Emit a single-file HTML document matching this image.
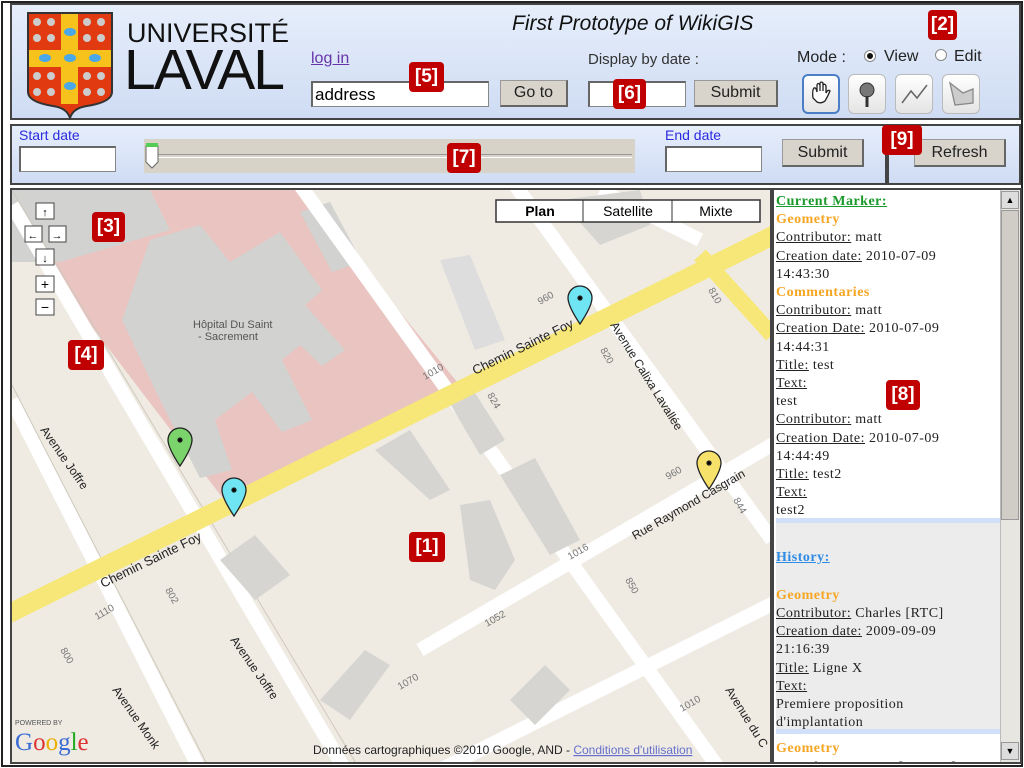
<!DOCTYPE html>
<html><head><meta charset="utf-8"><style>
*{margin:0;padding:0;box-sizing:border-box}
body{width:1024px;height:768px;overflow:hidden;background:#fff;font-family:"Liberation Sans",sans-serif;position:relative}
.abs{position:absolute}
.panel{position:absolute;border:2px solid #444;background:linear-gradient(#e6eefb,#cfdcf3)}
.btn{position:absolute;background:#d8d4cc;border:1px solid #999;border-right:2px solid #666;border-bottom:2px solid #666;font-size:16px;color:#222;text-align:center}
.inp{position:absolute;background:#fff;border:1px solid #888;border-top:2px solid #666;border-left:2px solid #666}
.lab{position:absolute;background:#c00000;color:#fff;font-weight:bold;font-size:19px;border-radius:4px;text-align:center;line-height:30px;height:30px;font-family:"Liberation Sans Narrow","Liberation Sans",sans-serif}
.tool{position:absolute;top:74px;width:38px;height:40px;border:1px solid #bbb;border-radius:6px;background:linear-gradient(#fff,#e4e4e4)}
.side{position:absolute;left:776px;top:190px;width:224px;height:572px;overflow:hidden;font-family:"Liberation Serif",serif;font-size:14px;letter-spacing:0.5px;line-height:18.2px;color:#222;white-space:nowrap}
.side u{text-decoration:underline}
.or{color:#f5a623;font-weight:bold}
</style></head><body>
<div class="abs" style="left:1px;top:1px;width:1022px;height:766px;border:2px solid #222"></div>
<!-- header -->
<div class="panel" style="left:10px;top:3px;width:1011px;height:117px"></div>
<svg class="abs" style="left:25px;top:10px" width="90" height="110" viewBox="0 0 90 110">
<path d="M3 3H87V82Q87 92 62 96Q48 98 45 108Q42 98 28 96Q3 92 3 82Z" fill="#e23a10" stroke="#333" stroke-width="2"/>
<rect x="36" y="4" width="17" height="90" fill="#f6c21b"/>
<rect x="4" y="40" width="82" height="17" fill="#f6c21b"/>
<g fill="#4aa8e8"><ellipse cx="45" cy="22" rx="6" ry="4"/><ellipse cx="45" cy="48" rx="6" ry="4"/><ellipse cx="20" cy="48" rx="6" ry="4"/><ellipse cx="70" cy="48" rx="6" ry="4"/><ellipse cx="45" cy="76" rx="6" ry="4"/></g>
<g fill="#ccc"><circle cx="12" cy="12" r="4"/><circle cx="26" cy="12" r="4"/><circle cx="12" cy="28" r="4"/><circle cx="26" cy="28" r="4"/><circle cx="62" cy="12" r="4"/><circle cx="76" cy="12" r="4"/><circle cx="62" cy="28" r="4"/><circle cx="76" cy="28" r="4"/><circle cx="12" cy="66" r="4"/><circle cx="26" cy="66" r="4"/><circle cx="12" cy="82" r="4"/><circle cx="26" cy="82" r="4"/><circle cx="62" cy="66" r="4"/><circle cx="76" cy="66" r="4"/><circle cx="62" cy="82" r="4"/><circle cx="76" cy="82" r="4"/></g>
</svg>
<div class="abs" style="left:127px;top:18px;font-size:27px;color:#111;letter-spacing:0px">UNIVERSITÉ</div>
<div class="abs" style="left:124px;top:40px;font-size:57px;color:#111;letter-spacing:-2px;line-height:60px">LAVAL</div>
<div class="abs" style="left:512px;top:12px;font-size:21px;font-style:italic;color:#111">First Prototype of WikiGIS</div>
<div class="abs" style="left:311px;top:50px;font-size:16px;color:#6633aa;text-decoration:underline">log in</div>
<div class="inp" style="left:311px;top:81px;width:178px;height:26px;font-size:17px;padding:2px 2px">address</div>
<div class="btn" style="left:500px;top:80px;width:68px;height:27px;line-height:24px">Go to</div>
<div class="abs" style="left:588px;top:51px;font-size:15px;color:#333">Display by date :</div>
<div class="inp" style="left:588px;top:81px;width:98px;height:26px"></div>
<div class="btn" style="left:694px;top:80px;width:84px;height:27px;line-height:24px">Submit</div>
<div class="abs" style="left:797px;top:49px;font-size:16px;color:#222">Mode :</div>
<div class="abs" style="left:864px;top:50px;width:12px;height:12px;border-radius:50%;background:#fff;border:1px solid #888"><div style="margin:2px;width:6px;height:6px;border-radius:50%;background:#111"></div></div>
<div class="abs" style="left:884px;top:48px;font-size:16px;color:#222">View</div>
<div class="abs" style="left:935px;top:49px;width:12px;height:12px;border-radius:50%;background:#fff;border:1px solid #888"></div>
<div class="abs" style="left:954px;top:48px;font-size:16px;color:#222">Edit</div>
<div class="tool" style="left:802px;border:2px solid #4a7fc8"><svg width="34" height="36"><path d="M9 22Q8 14 10 12Q12 11 13 16V9Q14 6 16 9V15V7Q17 5 19 7V15V9Q21 7 22 10V17Q24 13 26 15Q24 20 21 25Q17 28 13 26Z" fill="#fff" stroke="#222" stroke-width="1.3"/></svg></div>
<div class="tool" style="left:848px"><svg width="36" height="38"><circle cx="18" cy="15" r="7" fill="#777" stroke="#333"/><path d="M18 21V32" stroke="#333" stroke-width="3"/></svg></div>
<div class="tool" style="left:895px"><svg width="36" height="38"><path d="M6 28L15 16L21 23L31 10" fill="none" stroke="#666" stroke-width="1.5"/></svg></div>
<div class="tool" style="left:942px"><svg width="36" height="38"><path d="M7 8L12 30L30 28V14L20 18Z" fill="#ccc" stroke="#888" stroke-width="1.3"/></svg></div>
<div class="lab" style="left:928px;top:10px;width:29px">[2]</div>
<div class="lab" style="left:409px;top:62px;width:35px">[5]</div>
<div class="lab" style="left:613px;top:79px;width:33px">[6]</div>
<!-- second panel -->
<div class="panel" style="left:10px;top:124px;width:1011px;height:61px"></div>
<div class="abs" style="left:885px;top:124px;width:4px;height:61px;border-left:2px solid #444;border-right:2px solid #444;background:#dde7f7"></div>
<div class="abs" style="left:19px;top:127px;font-size:14px;color:#2a2ae0">Start date</div>
<div class="inp" style="left:19px;top:146px;width:97px;height:26px"></div>
<div class="abs" style="left:144px;top:139px;width:491px;height:34px;background:#d7d3c9"></div>
<div class="abs" style="left:150px;top:154px;width:482px;height:4px;border-top:1px solid #999;border-bottom:1px solid #fff"></div>
<svg class="abs" style="left:145px;top:142px" width="14" height="28"><path d="M1 4H13V20L7 26L1 20Z" fill="#fff" stroke="#666"/><rect x="1" y="1" width="12" height="4" fill="#5c5"/></svg>
<div class="lab" style="left:447px;top:143px;width:34px">[7]</div>
<div class="abs" style="left:665px;top:127px;font-size:14px;color:#2a2ae0">End date</div>
<div class="inp" style="left:665px;top:146px;width:97px;height:26px"></div>
<div class="btn" style="left:782px;top:139px;width:82px;height:28px;line-height:26px">Submit</div>
<div class="btn" style="left:914px;top:139px;width:92px;height:28px;line-height:26px">Refresh</div>
<div class="lab" style="left:882px;top:125px;width:40px">[9]</div>
<!-- map -->
<div class="abs" style="left:10px;top:188px;width:762px;height:576px;border:2px solid #444;overflow:hidden;background:#eeebe4">
<svg width="760" height="574" viewBox="12 190 760 574" style="display:block">
<rect x="0" y="180" width="800" height="600" fill="#efebe3"/>
<path d="M12 190H300L462 388L228 505L12 222Z" fill="#e9c4c0"/>
<g fill="#d2d2d0">
<path d="M12 190H150L170 230L60 262L12 262Z"/>
<path d="M150 240L200 225L230 262L280 232L322 290L305 305L345 350L322 366L300 345L282 360L312 420L282 432L252 392L215 420L232 470L200 478L160 400L122 320Z"/>
<path d="M300 212L330 202L362 262L332 272Z"/>
</g>
<path d="M440 260L470 255L505 340L475 350Z" fill="#ddd"/>
<g stroke="#fff" stroke-width="14" fill="none">
<path d="M12 400L200 770"/>
<path d="M12 205L345 770"/>
<path d="M300 185L720 770"/>
<path d="M515 185L772 540"/>
<path d="M420 650L780 440"/>
<path d="M440 770L780 600"/>
<path d="M600 190L700 240"/>
</g>
<g stroke="#cfc9bd" stroke-width="1" fill="none">
<path d="M12 385L210 770"/><path d="M12 190L360 770"/>
</g>
<g fill="#d6d5d2">
<path d="M375 450L410 430L450 490L430 500Z"/><path d="M445 395L470 385L505 440L480 455Z"/>
<path d="M500 475L535 458L580 540L550 555Z"/><path d="M460 505L490 500L515 560L495 590L470 580Z"/>
<path d="M220 560L255 535L290 575L255 600Z"/><path d="M320 700L365 650L390 665L350 720Z"/>
<path d="M510 700L545 665L570 690L535 725Z"/><path d="M560 200L640 190L650 225L600 245Z"/>
</g>
<path d="M0 618L780 232" stroke="#f6e778" stroke-width="19" fill="none"/>
<path d="M700 255L772 335" stroke="#f6e778" stroke-width="16" fill="none"/>
<g font-family="Liberation Sans" font-size="13" fill="#222">
<text transform="translate(103,588) rotate(-26)">Chemin Sainte Foy</text>
<text transform="translate(475,375) rotate(-26)">Chemin Sainte Foy</text>
<text transform="translate(40,430) rotate(55)" font-size="12">Avenue Joffre</text>
<text transform="translate(230,640) rotate(55)" font-size="12">Avenue Joffre</text>
<text transform="translate(112,690) rotate(55)" font-size="12">Avenue Monk</text>
<text transform="translate(610,325) rotate(58)" font-size="12">Avenue Calixa Lavallée</text>
<text transform="translate(635,540) rotate(-30)" font-size="12">Rue Raymond Casgrain</text>
<text transform="translate(725,690) rotate(58)" font-size="12">Avenue du C</text>
<text x="193" y="328" font-size="11" fill="#555">Hôpital Du Saint</text>
<text x="198" y="340" font-size="11" fill="#555">- Sacrement</text>
</g>
<g font-family="Liberation Sans" font-size="10" fill="#777">
<text transform="translate(425,380) rotate(-30)">1010</text><text transform="translate(540,305) rotate(-30)">960</text>
<text transform="translate(708,290) rotate(60)">810</text><text transform="translate(600,350) rotate(60)">820</text>
<text transform="translate(487,395) rotate(60)">824</text><text transform="translate(97,620) rotate(-30)">1110</text>
<text transform="translate(165,590) rotate(60)">802</text><text transform="translate(60,650) rotate(60)">800</text>
<text transform="translate(570,560) rotate(-30)">1016</text><text transform="translate(487,627) rotate(-30)">1052</text>
<text transform="translate(400,690) rotate(-30)">1070</text><text transform="translate(625,580) rotate(60)">850</text>
<text transform="translate(682,712) rotate(-30)">1010</text><text transform="translate(668,480) rotate(-30)">960</text>
<text transform="translate(733,500) rotate(60)">844</text>
</g>
<g stroke="#222" stroke-width="1.3">
<path d="M168 440a12 12 0 1 1 24 0q0 8-12 26q-12-18-12-26z" fill="#7bd36b"/><circle cx="180" cy="440" r="2" fill="#000"/>
<path d="M222 490a12 12 0 1 1 24 0q0 8-12 26q-12-18-12-26z" fill="#6fe4f2"/><circle cx="234" cy="490" r="2" fill="#000"/>
<path d="M568 298a12 12 0 1 1 24 0q0 8-12 26q-12-18-12-26z" fill="#6fe4f2"/><circle cx="580" cy="298" r="2" fill="#000"/>
<path d="M697 463a12 12 0 1 1 24 0q0 8-12 26q-12-18-12-26z" fill="#f6e16a"/><circle cx="709" cy="463" r="2" fill="#000"/>
</g>
<g font-family="Liberation Sans" font-size="11" text-anchor="middle" fill="#000">
<rect x="36" y="203" width="18" height="16" fill="#fff" stroke="#444"/><text x="45" y="216">↑</text>
<rect x="25" y="226" width="17" height="16" fill="#fff" stroke="#444"/><text x="33" y="239">←</text>
<rect x="49" y="226" width="17" height="16" fill="#fff" stroke="#444"/><text x="57" y="239">→</text>
<rect x="36" y="249" width="18" height="16" fill="#fff" stroke="#444"/><text x="45" y="262">↓</text>
<rect x="36" y="276" width="18" height="16" fill="#fff" stroke="#444"/><text x="45" y="289" font-size="14">+</text>
<rect x="36" y="299" width="18" height="16" fill="#fff" stroke="#444"/><text x="45" y="312" font-size="14">−</text>
</g>
<g font-family="Liberation Sans" font-size="14" text-anchor="middle">
<rect x="496" y="200" width="264" height="22" fill="#fff" stroke="#333" stroke-width="1.5"/>
<path d="M583 200V222M672 200V222" stroke="#333"/>
<text x="540" y="216" font-weight="bold">Plan</text><text x="628" y="216">Satellite</text><text x="716" y="216">Mixte</text>
</g>
<text x="15" y="725" font-family="Liberation Sans" font-size="7" fill="#555">POWERED BY</text>
<text x="15" y="750" font-family="Liberation Serif" font-size="25" fill="#3a6cd4">G<tspan fill="#d33">o</tspan><tspan fill="#e9b000">o</tspan>g<tspan fill="#2a2">l</tspan><tspan fill="#d33">e</tspan></text>
<text x="313" y="754" font-family="Liberation Sans" font-size="12" fill="#222">Données cartographiques ©2010 Google, AND - <tspan fill="#6670cc" text-decoration="underline">Conditions d'utilisation</tspan></text>
</svg>
</div>
<div class="lab" style="left:92px;top:212px;width:33px">[3]</div>
<div class="lab" style="left:68px;top:340px;width:36px">[4]</div>
<div class="lab" style="left:409px;top:532px;width:36px">[1]</div>
<!-- sidebar -->
<div class="abs" style="left:772px;top:188px;width:250px;height:576px;border:2px solid #444;background:#fff"></div>
<div class="abs" style="left:776px;top:519px;width:224px;height:212px;background:#ececec"></div>
<div class="abs" style="left:776px;top:518px;width:224px;height:5px;background:#cfe0f8"></div>
<div class="abs" style="left:776px;top:729px;width:224px;height:5px;background:#cfe0f8"></div>
<div class="side">
<div style="color:#1a9a2a;font-weight:bold;font-size:14px;text-decoration:underline;padding-top:3px">Current Marker:</div>
<div class="or">Geometry</div>
<div><u>Contributor:</u> matt</div>
<div><u>Creation date:</u> 2010-07-09</div>
<div>14:43:30</div>
<div class="or">Commentaries</div>
<div><u>Contributor:</u> matt</div>
<div><u>Creation Date:</u> 2010-07-09</div>
<div>14:44:31</div>
<div><u>Title:</u> test</div>
<div><u>Text:</u></div>
<div>test</div>
<div><u>Contributor:</u> matt</div>
<div><u>Creation Date:</u> 2010-07-09</div>
<div>14:44:49</div>
<div><u>Title:</u> test2</div>
<div><u>Text:</u></div>
<div>test2</div>
<div style="height:28px"></div>
<div style="color:#2d8be6;font-weight:bold;font-size:14px;text-decoration:underline">History:</div>
<div style="height:20px"></div>
<div class="or">Geometry</div>
<div><u>Contributor:</u> Charles [RTC]</div>
<div><u>Creation date:</u> 2009-09-09</div>
<div>21:16:39</div>
<div><u>Title:</u> Ligne X</div>
<div><u>Text:</u></div>
<div>Premiere proposition</div>
<div>d'implantation</div>
<div style="height:8px"></div>
<div class="or">Geometry</div>
<div><u>Contributor:</u> Simon [Citoyen]</div>
</div>
<div class="abs" style="left:1000px;top:190px;width:20px;height:572px;background:#e8e6e0;border-left:1px solid #bbb"></div>
<div class="abs" style="left:1001px;top:191px;width:18px;height:18px;background:#ddd;border:1px solid #999;font-size:9px;text-align:center;line-height:16px">▲</div>
<div class="abs" style="left:1001px;top:210px;width:18px;height:310px;background:#d0cdc6;border:1px solid #999"></div>
<div class="abs" style="left:1001px;top:742px;width:18px;height:18px;background:#ddd;border:1px solid #999;font-size:9px;text-align:center;line-height:16px">▼</div>
<div class="lab" style="left:886px;top:380px;width:34px">[8]</div>
</body></html>
